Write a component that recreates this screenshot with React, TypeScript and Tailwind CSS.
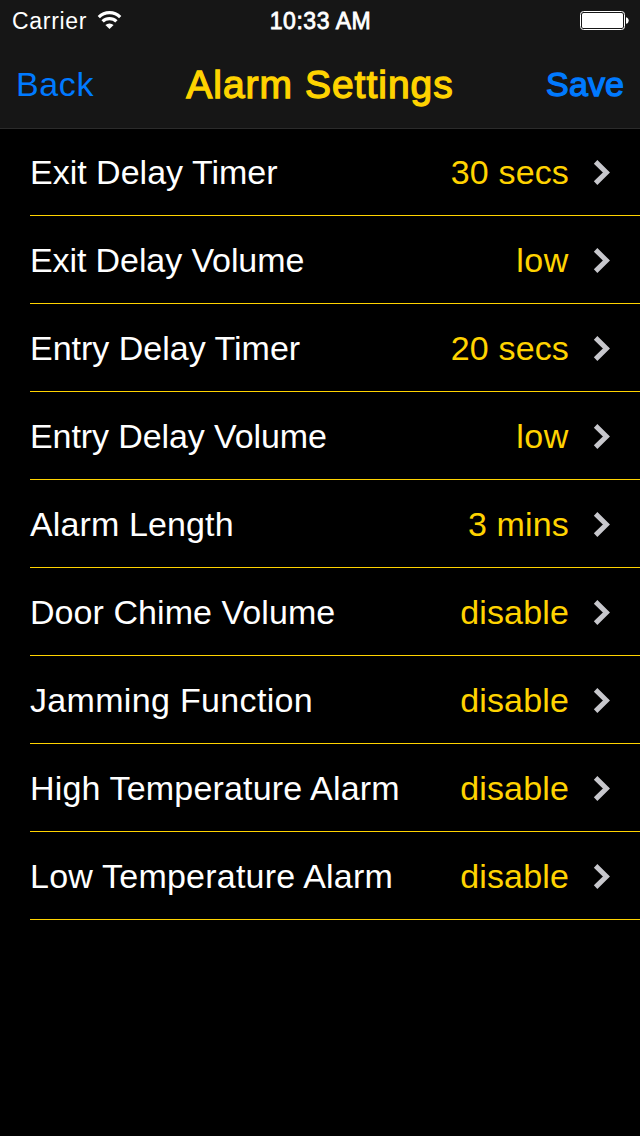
interface Setting {
  label: string;
  value: string;
  labelClass?: string;
  valueClass?: string;
}

const SETTINGS: Setting[] = [
  { label: "Exit Delay Timer", value: "30 secs" },
  { label: "Exit Delay Volume", value: "low", labelClass: "tracking-[-0.1px]", valueClass: "tracking-[0.6px]" },
  { label: "Entry Delay Timer", value: "20 secs" },
  { label: "Entry Delay Volume", value: "low", labelClass: "tracking-[-0.1px]", valueClass: "tracking-[0.6px]" },
  { label: "Alarm Length", value: "3 mins", labelClass: "tracking-[0.12px]" },
  { label: "Door Chime Volume", value: "disable", labelClass: "tracking-[0.06px]" },
  { label: "Jamming Function", value: "disable", labelClass: "tracking-[0.33px]" },
  { label: "High Temperature Alarm", value: "disable", labelClass: "tracking-[0.17px]" },
  { label: "Low Temperature Alarm", value: "disable", labelClass: "tracking-[0.22px]" },
];

function StatusBar() {
  return (
    <div className="grid h-10 grid-cols-3 items-center pr-[11px] pl-3 text-white">
      <div className="flex items-center gap-[10px] pt-0.5">
        <span className="text-[23px] tracking-[0.7px]">Carrier</span>
        <svg className="mb-0.5" width="25" height="18" viewBox="0 0 25 18" fill="none">
          <path d="M1.8 6.1a15.1 15.1 0 0 1 21.4 0" stroke="white" strokeWidth="3.2" />
          <path d="M5.6 10.4a9.8 9.8 0 0 1 13.8 0" stroke="white" strokeWidth="3.2" />
          <path d="M12.5 18 8.4 14a6 6 0 0 1 8.2 0z" fill="white" />
        </svg>
      </div>
      <span className="pt-0.5 text-center text-[23px] tracking-[0.55px] [-webkit-text-stroke:0.8px_white]">
        10:33 AM
      </span>
      <svg className="justify-self-end" width="49" height="20" viewBox="0 0 49 20">
        <rect x="0.5" y="1.5" width="44" height="18" rx="3" fill="none" stroke="white" />
        <rect x="2" y="3" width="41" height="15" rx="1.5" fill="white" />
        <path d="M46 7.2c3.6.5 3.6 6.1 0 6.6z" fill="white" />
      </svg>
    </div>
  );
}

function SettingRow({ label, value, labelClass = "", valueClass = "tracking-[0.15px]" }: Setting) {
  return (
    <li className="ml-[30px] flex h-[88px] items-center border-b border-[#ffd300] pt-0.5 pr-[29px]">
      <span className={`text-[34px] whitespace-nowrap text-white ${labelClass}`}>{label}</span>
      <span className={`ml-auto text-[34px] whitespace-nowrap text-[#ffd300] ${valueClass}`}>{value}</span>
      <svg className="ml-6" width="18" height="26" viewBox="0 0 18 26" fill="none">
        <path d="M2.6 1.9l10.8 10.6L2.6 23.1" stroke="#c7c7cc" strokeWidth="5" />
      </svg>
    </li>
  );
}

export default function App() {
  return (
    <div className="h-[1136px] w-[640px] bg-black font-['Liberation_Sans',sans-serif]">
      <header className="h-[129px] border-b border-[#2b2b2b] bg-[#161616]">
        <StatusBar />
        <nav className="flex h-[88px] items-center px-4">
          <button className="flex-1 text-left text-[34px] tracking-[0.6px] text-[#007aff]">Back</button>
          <h1 className="pt-0.5 text-[39px] tracking-[1px] text-[#ffd300] [-webkit-text-stroke:1.3px_#ffd300]">
            Alarm Settings
          </h1>
          <button className="flex-1 text-right text-[34px] tracking-[0.1px] text-[#007aff] [-webkit-text-stroke:1.3px_#007aff]">
            Save
          </button>
        </nav>
      </header>
      <ul className="-mt-px">
        {SETTINGS.map((s) => (
          <SettingRow key={s.label} {...s} />
        ))}
      </ul>
    </div>
  );
}
